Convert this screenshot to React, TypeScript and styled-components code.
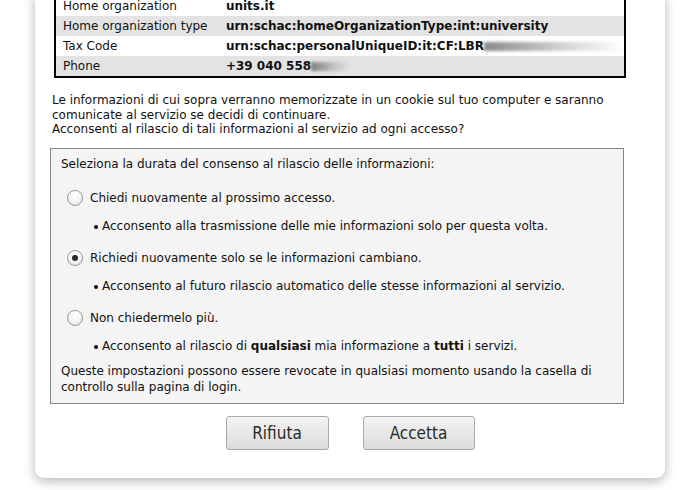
import React from "react";
import styled, { createGlobalStyle } from "styled-components";

const Global = createGlobalStyle`
  html, body { margin: 0; padding: 0; background: #ffffff; }
  body { font-family: "DejaVu Sans", sans-serif; color: #111; overflow: hidden; }
`;

const Page = styled.div`
  width: 698px;
  height: 490px;
  overflow: hidden;
  background: #ffffff;
`;

const Card = styled.div`
  margin: -6px 0 0 35px;
  width: 630px;
  background: #fff;
  border-radius: 0 0 9px 9px;
  box-shadow: 0 3px 12px rgba(0, 0, 0, 0.3);
  padding: 0 0 28px 0;
`;

const Table = styled.table`
  margin: 0 0 0 19px;
  width: 572px;
  border-collapse: collapse;
  border: 2px solid #000;
  font-size: 12px;
`;

const Row = styled.tr<{ $shade?: boolean }>`
  background: ${(p) => (p.$shade ? "#e3e3e3" : "#ffffff")};
  td {
    height: 20px;
    line-height: 20px;
  }
`;

const Label = styled.td`
  padding: 0 0 0 7px;
  width: 177px;
  white-space: nowrap;
`;

const Value = styled.td`
  font-weight: bold;
  padding: 0;
  white-space: nowrap;
`;

const Blur = styled.span<{ $w: number }>`
  display: inline-block;
  width: ${(p) => p.$w}px;
  height: 9px;
  vertical-align: middle;
  background: linear-gradient(90deg, rgba(60,60,60,0.6), rgba(140,140,140,0.35) 60%, rgba(255,255,255,0));
  filter: blur(1.5px);
`;

const Intro = styled.p`
  margin: 15px 0 0 17px;
  font-size: 12px;
  line-height: 14.5px;
  width: 580px;
`;

const Box = styled.div`
  margin: 11px 0 0 15px;
  width: 552px;
  border: 1px solid #888;
  background: #f4f4f4;
  padding: 7px 10px 8px 10px;
  font-size: 12px;
  line-height: 16px;
`;

const Heading = styled.div`
  margin-bottom: 16px;
`;

const Option = styled.label`
  display: flex;
  align-items: center;
  gap: 7px;
  margin-left: 6px;
  height: 20px;
`;

const Radio = styled.span<{ $checked?: boolean }>`
  width: 14px;
  height: 14px;
  border-radius: 50%;
  border: 1px solid #9a9a9a;
  background: radial-gradient(circle at 50% 35%, #ffffff 0%, #f4f4f4 50%, #d8d8d8 100%);
  box-shadow: inset 0 1px 1px rgba(255,255,255,0.8);
  display: flex;
  align-items: center;
  justify-content: center;
  &::after {
    content: "";
    width: 6px;
    height: 6px;
    border-radius: 50%;
    background: ${(p) => (p.$checked ? "#2a2a2a" : "transparent")};
  }
`;

const Bullets = styled.ul<{ $last?: boolean }>`
  margin: 10px 0 ${(p) => (p.$last ? "9px" : "14px")} 0;
  padding: 0 0 0 33px;
  list-style: none;
`;

const Bullet = styled.li`
  display: flex;
  align-items: center;
  gap: 4px;
  &::before {
    content: "";
    width: 4px;
    height: 4px;
    border-radius: 50%;
    background: #111;
    margin-top: 2px;
  }
`;

const Note = styled.div``;

const Actions = styled.div`
  display: flex;
  justify-content: center;
  gap: 34px;
  margin-top: 12px;
`;

const Button = styled.button<{ $w: number }>`
  width: ${(p) => p.$w}px;
  height: 34px;
  border: 1px solid #a9a9a9;
  border-radius: 3px;
  background: linear-gradient(#f4f4f4, #dcdcdc);
  font-family: "DejaVu Sans Condensed", "DejaVu Sans", sans-serif;
  font-size: 17px;
  color: #2b2b2b;
  padding: 0;
`;

export default function App() {
  return (
    <Page>
      <Global />
      <Card>
        <Table>
          <tbody>
            <Row>
              <Label>Home organization</Label>
              <Value>units.it</Value>
            </Row>
            <Row $shade>
              <Label>Home organization type</Label>
              <Value>urn:schac:homeOrganizationType:int:university</Value>
            </Row>
            <Row>
              <Label>Tax Code</Label>
              <Value>
                urn:schac:personalUniqueID:it:CF:LBR<Blur $w={140} />
              </Value>
            </Row>
            <Row $shade>
              <Label>Phone</Label>
              <Value>
                +39 040 558<Blur $w={40} />
              </Value>
            </Row>
          </tbody>
        </Table>
        <Intro>
          Le informazioni di cui sopra verranno memorizzate in un cookie sul tuo computer e saranno
          comunicate al servizio se decidi di continuare.
          <br />
          Acconsenti al rilascio di tali informazioni al servizio ad ogni accesso?
        </Intro>
        <Box>
          <Heading>Seleziona la durata del consenso al rilascio delle informazioni:</Heading>
          <Option>
            <Radio />
            Chiedi nuovamente al prossimo accesso.
          </Option>
          <Bullets>
            <Bullet>Acconsento alla trasmissione delle mie informazioni solo per questa volta.</Bullet>
          </Bullets>
          <Option>
            <Radio $checked />
            Richiedi nuovamente solo se le informazioni cambiano.
          </Option>
          <Bullets>
            <Bullet>Acconsento al futuro rilascio automatico delle stesse informazioni al servizio.</Bullet>
          </Bullets>
          <Option>
            <Radio />
            Non chiedermelo più.
          </Option>
          <Bullets $last>
            <Bullet>
              <span>
                Acconsento al rilascio di <b>qualsiasi</b> mia informazione a <b>tutti</b> i servizi.
              </span>
            </Bullet>
          </Bullets>
          <Note>
            Queste impostazioni possono essere revocate in qualsiasi momento usando la casella di
            controllo sulla pagina di login.
          </Note>
        </Box>
        <Actions>
          <Button $w={103}>Rifiuta</Button>
          <Button $w={112}>Accetta</Button>
        </Actions>
      </Card>
    </Page>
  );
}
